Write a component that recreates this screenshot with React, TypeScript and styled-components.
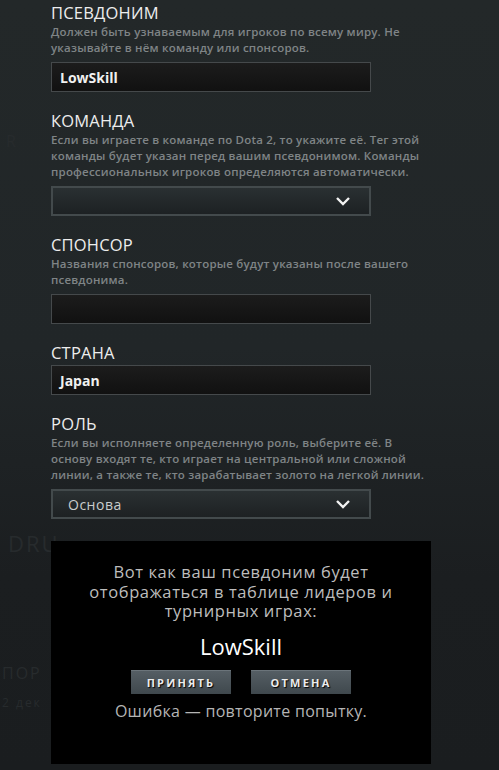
import React from "react";
import styled, { createGlobalStyle } from "styled-components";

const GlobalStyle = createGlobalStyle`
  html, body {
    margin: 0;
    padding: 0;
    background: #1c2022;
  }
  body {
    font-family: "Open Sans", "Noto Sans", sans-serif;
  }
`;

interface IField {
  title: string;
  desc?: string;
  kind: "input" | "select";
  value?: string;
}

const fields: IField[] = [
  {
    title: "ПСЕВДОНИМ",
    desc: "Должен быть узнаваемым для игроков по всему миру. Не указывайте в нём команду или спонсоров.",
    kind: "input",
    value: "LowSkill",
  },
  {
    title: "КОМАНДА",
    desc: "Если вы играете в команде по Dota 2, то укажите её. Тег этой команды будет указан перед вашим псевдонимом. Команды профессиональных игроков определяются автоматически.",
    kind: "select",
  },
  {
    title: "СПОНСОР",
    desc: "Названия спонсоров, которые будут указаны после вашего псевдонима.",
    kind: "input",
  },
  {
    title: "СТРАНА",
    kind: "input",
    value: "Japan",
  },
  {
    title: "РОЛЬ",
    desc: "Если вы исполняете определенную роль, выберите её. В основу входят те, кто играет на центральной или сложной линии, а также те, кто зарабатывает золото на легкой линии.",
    kind: "select",
    value: "Основа",
  },
];

const Chevron = () => (
  <svg width="16" height="10" viewBox="0 0 16 10">
    <path d="M2 2 L8 8 L14 2" fill="none" stroke="#f2f2f2" strokeWidth="2.4" />
  </svg>
);

const App: React.FC = () => {
  return (
    <Page>
      <GlobalStyle />
      <Ghost top={130} left={6}>R</Ghost>
      <Ghost top={528} left={8} big>DRU</Ghost>
      <Ghost top={662} left={2}>ПОР</Ghost>
      <Ghost top={694} left={2} small>2 дек</Ghost>

      <Form>
        {fields.map(f => (
          <Section key={f.title}>
            <Title>{f.title}</Title>
            {f.desc && <Desc>{f.desc}</Desc>}
            {f.kind === "input" ? (
              <TextBox tight={!f.desc}>{f.value}</TextBox>
            ) : (
              <SelectBox>
                <span>{f.value}</span>
                <Chevron />
              </SelectBox>
            )}
          </Section>
        ))}
      </Form>

      <Modal>
        <Message>Вот как ваш псевдоним будет отображаться в таблице лидеров и турнирных играх:</Message>
        <Preview>LowSkill</Preview>
        <Buttons>
          <Button>ПРИНЯТЬ</Button>
          <Button>ОТМЕНА</Button>
        </Buttons>
        <Error>Ошибка — повторите попытку.</Error>
      </Modal>
    </Page>
  );
};

const Page = styled.div`
  position: relative;
  width: 499px;
  height: 770px;
  overflow: hidden;
  box-sizing: border-box;
  padding: 0 0 0 51px;
  background: linear-gradient(180deg, #232829 0%, #212628 45%, #1b1e20 75%, #1a1d1f 100%);
`;

const Ghost = styled.div<{ top: number; left: number; big?: boolean; small?: boolean }>`
  position: absolute;
  top: ${p => p.top}px;
  left: ${p => p.left}px;
  font-size: ${p => (p.big ? 22 : p.small ? 12 : 16)}px;
  letter-spacing: 2px;
  color: #272b2d;
  white-space: nowrap;
`;

const Form = styled.div`
  position: relative;
  display: flex;
  flex-direction: column;
  gap: 18px;
  width: 378px;
  padding-top: 2px;
`;

const Section = styled.div`
  display: flex;
  flex-direction: column;
`;

const Title = styled.div`
  font-size: 16.5px;
  line-height: 22px;
  font-weight: 500;
  color: #ededed;
  letter-spacing: 0.2px;
`;

const Desc = styled.div`
  font-size: 11.5px;
  line-height: 16px;
  font-weight: 600;
  color: #7f8486;
  letter-spacing: 0.2px;
`;

const TextBox = styled.div<{ tight?: boolean }>`
  box-sizing: border-box;
  width: 320px;
  height: 30px;
  margin-top: ${p => (p.tight ? 1 : 6)}px;
  padding: 0 8px;
  display: flex;
  align-items: center;
  border: 1px solid #45494b;
  background: linear-gradient(180deg, #1c1c1c 0%, #111 100%);
  color: #f0f0f0;
  font-size: 14px;
  font-weight: 700;
`;

const SelectBox = styled.div`
  box-sizing: border-box;
  width: 320px;
  height: 30px;
  margin-top: 6px;
  padding: 0 18px 0 15px;
  display: flex;
  align-items: center;
  justify-content: space-between;
  border: 2px solid #434a4c;
  background: linear-gradient(180deg, #2a3032 0%, #1d2123 100%);
  color: #c9cccc;
  font-size: 14px;
  letter-spacing: 0.5px;
`;

const Modal = styled.div`
  position: absolute;
  left: 51px;
  top: 541px;
  width: 380px;
  height: 223px;
  box-sizing: border-box;
  background: #000;
  display: flex;
  flex-direction: column;
  align-items: center;
  padding-top: 21px;
`;

const Message = styled.div`
  width: 312px;
  text-align: center;
  font-size: 16.5px;
  line-height: 19.5px;
  color: #bdbdbd;
  font-weight: 500;
  letter-spacing: 0.6px;
`;

const Preview = styled.div`
  margin-top: 10px;
  font-size: 22px;
  line-height: 30px;
  color: #fff;
`;

const Buttons = styled.div`
  display: flex;
  gap: 20px;
  margin-top: 9px;
`;

const Button = styled.div`
  box-sizing: border-box;
  width: 100px;
  height: 24px;
  display: flex;
  align-items: center;
  justify-content: center;
  background: linear-gradient(180deg, #555e64 0%, #3f484d 100%);
  border-top: 1px solid #6b747a;
  color: #ececec;
  font-size: 11px;
  font-weight: 700;
  letter-spacing: 2.2px;
  text-shadow: 1px 1px 1px #000;
`;

const Error = styled.div`
  margin-top: 7px;
  font-size: 16px;
  line-height: 20px;
  color: #b5b5b5;
  letter-spacing: 0.3px;
`;

export default App;
